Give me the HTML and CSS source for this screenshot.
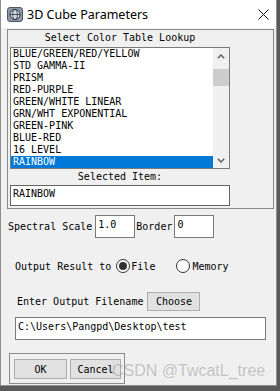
FILE: index.html
```html
<!DOCTYPE html>
<html lang="en">
<head>
    <meta charset="UTF-8">
    <title>3D Cube Parameters</title>
    <link rel="stylesheet" href="styles.css">
</head>
<body>
    <div class="window">
        <div class="titlebar">
            <svg class="app-icon" width="16" height="15" viewBox="0 0 16 15">
                <rect x="0.5" y="0.5" width="15" height="14" rx="2.5" fill="#8e98a8" stroke="#4e5664"/>
                <circle cx="8" cy="7.5" r="5" fill="#d4d9e0" stroke="#2e3440"/>
                <ellipse cx="8" cy="7.5" rx="2.3" ry="5" fill="none" stroke="#2e3440" stroke-width="0.8"/>
                <path d="M3 7.5h10" stroke="#2e3440" stroke-width="0.8"/>
            </svg>
            <span class="title">3D Cube Parameters</span>
            <svg class="close" width="11" height="11" viewBox="0 0 11 11">
                <path d="M0.5 0.5L10.5 10.5M10.5 0.5L0.5 10.5" stroke="#111" stroke-width="1"/>
            </svg>
        </div>

        <div class="group lookup">
            <div class="column">
                <div class="caption">Select Color Table Lookup</div>
                <div class="listbox">
                    <ul class="items">
                        <li>BLUE/GREEN/RED/YELLOW</li>
                        <li>STD GAMMA-II</li>
                        <li>PRISM</li>
                        <li>RED-PURPLE</li>
                        <li>GREEN/WHITE LINEAR</li>
                        <li>GRN/WHT EXPONENTIAL</li>
                        <li>GREEN-PINK</li>
                        <li>BLUE-RED</li>
                        <li>16 LEVEL</li>
                        <li class="active">RAINBOW</li>
                    </ul>
                    <div class="scrollbar">
                        <div class="arrow">
                            <svg width="8" height="5" viewBox="0 0 8 5"><path d="M0.8 4.2L4 1L7.2 4.2" fill="none" stroke="#606060" stroke-width="1.5"/></svg>
                        </div>
                        <div class="thumb"></div>
                        <div class="arrow down">
                            <svg width="8" height="5" viewBox="0 0 8 5"><path d="M0.8 0.8L4 4L7.2 0.8" fill="none" stroke="#606060" stroke-width="1.5"/></svg>
                        </div>
                    </div>
                </div>
                <div class="caption small">Selected Item:</div>
                <div class="field selected">RAINBOW</div>
            </div>
        </div>

        <div class="row scale-row">
            <span class="label scale-label">Spectral Scale</span>
            <div class="field num">1.0</div>
            <span class="label border-label">Border</span>
            <div class="field num">0</div>
        </div>

        <div class="row output-row">
            <span class="label">Output Result to</span>
            <span class="radio checked"></span>
            <span class="label file-label">File</span>
            <span class="radio memory"></span>
            <span class="label memory-label">Memory</span>
        </div>

        <div class="row filename-row">
            <span class="label">Enter Output Filename</span>
            <button class="btn choose">Choose</button>
        </div>

        <div class="field path">C:\Users\Pangpd\Desktop\test</div>

        <div class="group actions">
            <button class="btn ok">OK</button>
            <button class="btn cancel">Cancel</button>
        </div>

        <div class="watermark">CSDN @TwcatL_tree</div>
    </div>
</body>
</html>
```

FILE: styles.css
```css
* {
    margin: 0;
    padding: 0;
    box-sizing: border-box;
}

body {
    width: 280px;
    height: 391px;
    overflow: hidden;
    background: #5a5a5a;
    font-family: "DejaVu Sans Mono", monospace;
    font-size: 10px;
    color: #000;
}

.window {
    position: relative;
    width: 277px;
    height: 386px;
    background: #f0f0f0;
    border: 1px solid #8f8f8f;
    border-top: none;
}

.titlebar {
    height: 28px;
    background: #fff;
    display: flex;
    align-items: center;
    padding-left: 6px;
}

.title {
    margin-left: 4px;
    font-family: "Noto Sans", sans-serif;
    font-size: 12.5px;
}

.close {
    margin-left: auto;
    margin-right: 7px;
}

.group {
    border: 1px solid #8a8a8a;
}

.lookup {
    margin: 1px 2px 0 6px;
    padding: 0 0 2px 2px;
}

.column {
    width: 220px;
}

.caption {
    height: 17px;
    line-height: 16px;
    text-align: center;
}

.caption.small {
    height: 16px;
    line-height: 16px;
}

.listbox {
    height: 122px;
    border: 1px solid #7a7a7a;
    background: #fff;
    display: flex;
}

.items {
    flex: 1;
    list-style: none;
}

.items li {
    height: 12px;
    line-height: 12px;
    padding-left: 2px;
    white-space: nowrap;
}

.items li.active {
    background: #0078d7;
    color: #fff;
}

.scrollbar {
    width: 16px;
    background: #f0f0f0;
    display: flex;
    flex-direction: column;
}

.arrow {
    height: 16px;
    display: flex;
    align-items: center;
    justify-content: center;
}

.arrow.down {
    margin-top: auto;
}

.thumb {
    margin-top: 5px;
    height: 17px;
    background: #cdcdcd;
}

.field {
    background: #fff;
    border: 1px solid #7a7a7a;
    padding-left: 2px;
    line-height: 17px;
    white-space: nowrap;
}

.selected {
    height: 21px;
    border-color: #646464;
    line-height: 16px;
}

.row {
    display: flex;
    align-items: center;
}

.scale-row {
    margin-top: 6px;
    height: 23px;
    padding-left: 7px;
}

.scale-label {
    margin-right: 3px;
}

.num {
    width: 40px;
    height: 23px;
}

.border-label {
    margin: 0 2px 0 1px;
}

.output-row {
    margin-top: 21px;
    height: 14px;
    padding-left: 14px;
}

.radio {
    width: 14px;
    height: 14px;
    border: 1px solid #333;
    border-radius: 50%;
    background: #fff;
    margin-left: 5px;
    display: flex;
    align-items: center;
    justify-content: center;
}

.radio.checked::after {
    content: "";
    width: 8px;
    height: 8px;
    border-radius: 50%;
    background: #333;
}

.file-label {
    margin-left: 1px;
}

.radio.memory {
    margin-left: 21px;
}

.memory-label {
    margin-left: 2px;
}

.filename-row {
    margin-top: 19px;
    height: 19px;
    padding-left: 16px;
}

.btn {
    font-family: "DejaVu Sans Mono", monospace;
    font-size: 10px;
    background: #e1e1e1;
    border: 1px solid #adadad;
    color: #000;
}

.choose {
    margin-left: 4px;
    width: 53px;
    height: 19px;
}

.path {
    margin: 6px 0 0 14px;
    width: 251px;
    height: 23px;
}

.actions {
    margin: 13px 0 0 8px;
    width: 116px;
    display: flex;
    gap: 3px;
    padding: 5px 3px 4px 4px;
}

.ok {
    width: 53px;
    height: 20px;
}

.cancel {
    width: 51px;
    height: 20px;
}

.watermark {
    position: absolute;
    left: 111px;
    top: 362px;
    font-family: "Liberation Sans", Arial, sans-serif;
    font-size: 16px;
    color: rgba(150, 150, 150, 0.5);
    white-space: nowrap;
}
```
